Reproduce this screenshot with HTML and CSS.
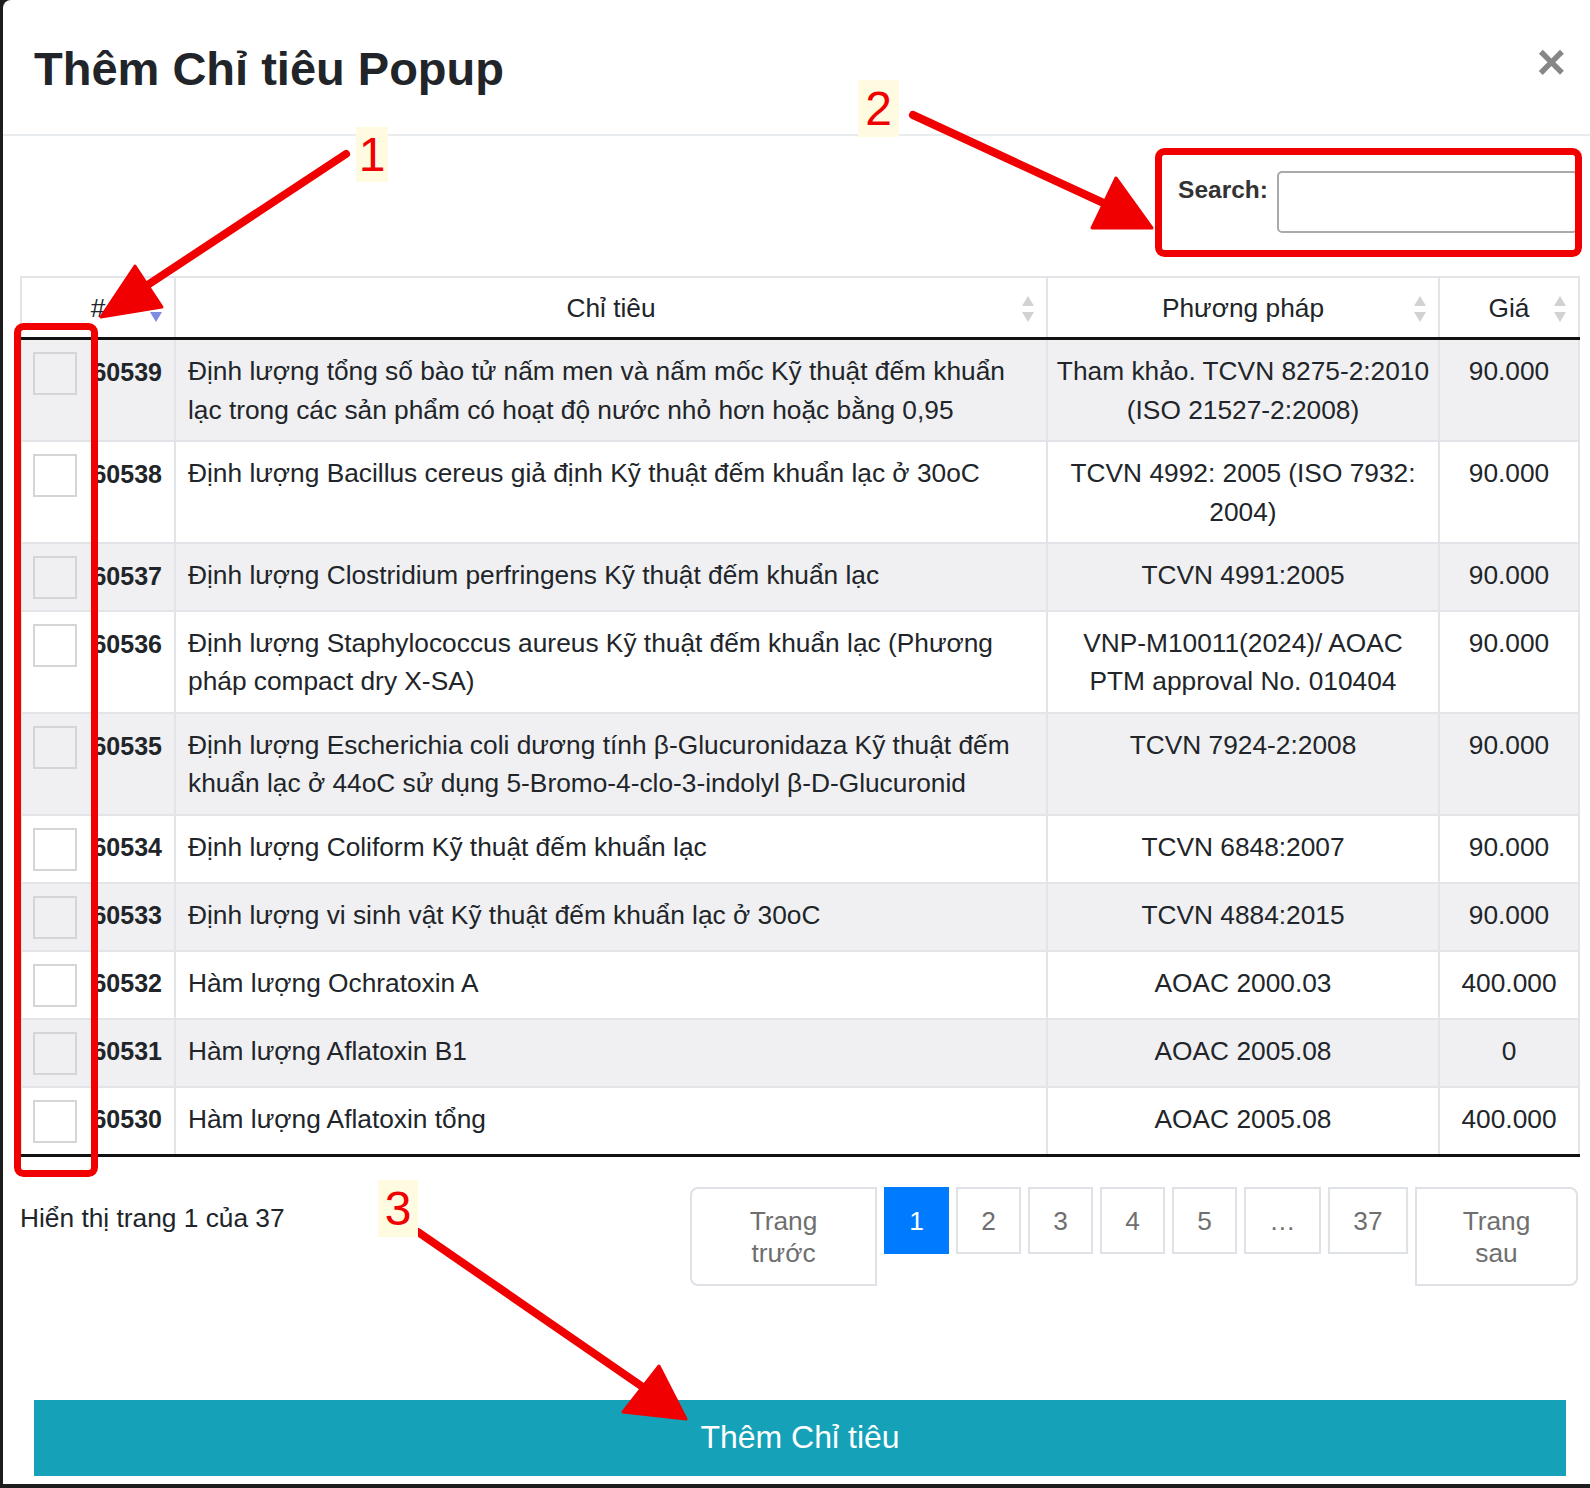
FILE: index.html
```html
<!DOCTYPE html>
<html lang="vi">
<head>
    <meta charset="UTF-8">
    <meta name="viewport" content="width=device-width, initial-scale=1.0">
    <title>Thêm Chỉ tiêu Popup</title>
    <link rel="stylesheet" href="styles.css">
</head>
<body>
    <div class="modal">
        <div class="modal-header">
            <h1 class="modal-title">Thêm Chỉ tiêu Popup</h1>
            <span class="close">×</span>
        </div>
        <div class="modal-body">
            <div class="search">
                <label for="q">Search:</label>
                <input id="q" type="search">
            </div>
            <table class="grid">
                <colgroup>
                    <col class="c-id"><col class="c-name"><col class="c-method"><col class="c-price">
                </colgroup>
                <thead>
                    <tr>
                        <th>#<svg class="sort" viewBox="0 0 12 28"><polygon class="on" points="0,17 6,27 12,17"/></svg></th>
                        <th>Chỉ tiêu<svg class="sort" viewBox="0 0 12 28"><polygon points="0,11 6,1 12,11"/><polygon points="0,17 6,27 12,17"/></svg></th>
                        <th>Phương pháp<svg class="sort" viewBox="0 0 12 28"><polygon points="0,11 6,1 12,11"/><polygon points="0,17 6,27 12,17"/></svg></th>
                        <th>Giá<svg class="sort" viewBox="0 0 12 28"><polygon points="0,11 6,1 12,11"/><polygon points="0,17 6,27 12,17"/></svg></th>
                    </tr>
                </thead>
                <tbody>
                    <tr>
                        <td><div class="idcell"><input class="pick" type="checkbox"><b>60539</b></div></td>
                        <td>Định lượng tổng số bào tử nấm men và nấm mốc Kỹ thuật đếm khuẩn<br>lạc trong các sản phẩm có hoạt độ nước nhỏ hơn hoặc bằng 0,95</td>
                        <td class="mid">Tham khảo. TCVN 8275-2:2010<br>(ISO 21527-2:2008)</td>
                        <td class="mid">90.000</td>
                    </tr>
                    <tr>
                        <td><div class="idcell"><input class="pick" type="checkbox"><b>60538</b></div></td>
                        <td>Định lượng Bacillus cereus giả định Kỹ thuật đếm khuẩn lạc ở 30oC</td>
                        <td class="mid">TCVN 4992: 2005 (ISO 7932:<br>2004)</td>
                        <td class="mid">90.000</td>
                    </tr>
                    <tr>
                        <td><div class="idcell"><input class="pick" type="checkbox"><b>60537</b></div></td>
                        <td>Định lượng Clostridium perfringens Kỹ thuật đếm khuẩn lạc</td>
                        <td class="mid">TCVN 4991:2005</td>
                        <td class="mid">90.000</td>
                    </tr>
                    <tr>
                        <td><div class="idcell"><input class="pick" type="checkbox"><b>60536</b></div></td>
                        <td>Định lượng Staphylococcus aureus Kỹ thuật đếm khuẩn lạc (Phương<br>pháp compact dry X-SA)</td>
                        <td class="mid">VNP-M10011(2024)/ AOAC<br>PTM approval No. 010404</td>
                        <td class="mid">90.000</td>
                    </tr>
                    <tr>
                        <td><div class="idcell"><input class="pick" type="checkbox"><b>60535</b></div></td>
                        <td>Định lượng Escherichia coli dương tính β-Glucuronidaza Kỹ thuật đếm<br>khuẩn lạc ở 44oC sử dụng 5-Bromo-4-clo-3-indolyl β-D-Glucuronid</td>
                        <td class="mid">TCVN 7924-2:2008</td>
                        <td class="mid">90.000</td>
                    </tr>
                    <tr>
                        <td><div class="idcell"><input class="pick" type="checkbox"><b>60534</b></div></td>
                        <td>Định lượng Coliform Kỹ thuật đếm khuẩn lạc</td>
                        <td class="mid">TCVN 6848:2007</td>
                        <td class="mid">90.000</td>
                    </tr>
                    <tr>
                        <td><div class="idcell"><input class="pick" type="checkbox"><b>60533</b></div></td>
                        <td>Định lượng vi sinh vật Kỹ thuật đếm khuẩn lạc ở 30oC</td>
                        <td class="mid">TCVN 4884:2015</td>
                        <td class="mid">90.000</td>
                    </tr>
                    <tr>
                        <td><div class="idcell"><input class="pick" type="checkbox"><b>60532</b></div></td>
                        <td>Hàm lượng Ochratoxin A</td>
                        <td class="mid">AOAC 2000.03</td>
                        <td class="mid">400.000</td>
                    </tr>
                    <tr>
                        <td><div class="idcell"><input class="pick" type="checkbox"><b>60531</b></div></td>
                        <td>Hàm lượng Aflatoxin B1</td>
                        <td class="mid">AOAC 2005.08</td>
                        <td class="mid">0</td>
                    </tr>
                    <tr>
                        <td><div class="idcell"><input class="pick" type="checkbox"><b>60530</b></div></td>
                        <td>Hàm lượng Aflatoxin tổng</td>
                        <td class="mid">AOAC 2005.08</td>
                        <td class="mid">400.000</td>
                    </tr>
                </tbody>
            </table>
            <div class="table-foot">
                <div class="info">Hiển thị trang 1 của 37</div>
                <ul class="pager">
                    <li class="prev">Trang<br>trước</li>
                    <li class="num active">1</li>
                    <li class="num">2</li>
                    <li class="num">3</li>
                    <li class="num">4</li>
                    <li class="num">5</li>
                    <li class="num gap">…</li>
                    <li class="num last">37</li>
                    <li class="next">Trang<br>sau</li>
                </ul>
            </div>
        </div>
        <div class="modal-footer">
            <button class="btn-add">Thêm Chỉ tiêu</button>
        </div>
    </div>

    <!-- annotation layer drawn on top of the screenshot -->
    <svg class="marks" viewBox="0 0 1590 1488">
        <rect x="17.5" y="326.5" width="77" height="847" rx="6"/>
        <rect x="1158.5" y="151.5" width="420" height="102" rx="6"/>
        <line x1="346" y1="154" x2="140" y2="290"/>
        <polygon points="101,317 135,266 162,307"/>
        <line x1="913" y1="115" x2="1110" y2="206"/>
        <polygon points="1152,228 1116,178 1092,228"/>
        <line x1="418" y1="1232" x2="650" y2="1392"/>
        <polygon points="686,1419 659,1366 623,1412"/>
    </svg>
    <span class="tag tag-1">1</span>
    <span class="tag tag-2">2</span>
    <span class="tag tag-3">3</span>
</body>
</html>
```

FILE: styles.css
```css
body {
    margin: 0;
    background-color: #1d1d1d;
    font-family: "Liberation Sans", Arial, Helvetica, sans-serif;
    color: #212529;
    font-size: 26.3px;
    line-height: 38.4px;
    overflow: hidden;
}
.modal {
    margin-left: 3px;
    height: 1484px;
    background-color: #ffffff;
    border-top-left-radius: 8px;
    overflow: hidden;
}
.modal-header {
    box-sizing: border-box;
    height: 136px;
    display: flex;
    align-items: center;
    justify-content: space-between;
    padding: 4px 24px 0 31px;
    border-bottom: 2px solid #e9ecef;
}
.modal-title {
    margin: 0;
    font-size: 47px;
    line-height: 1.2;
    font-weight: bold;
}
.close {
    font-size: 50px;
    line-height: 1;
    font-weight: bold;
    color: #868686;
    margin-bottom: 14px;
}
.modal-body {
    padding: 0 12px 0 17px;
}
.search {
    display: flex;
    justify-content: flex-end;
    align-items: flex-start;
    margin-top: 35px;
}
.search label {
    font-weight: bold;
    font-size: 24.5px;
    color: #333333;
    margin-right: 9px;
}
.search input {
    box-sizing: border-box;
    width: 301px;
    height: 62px;
    border: 2px solid #aaaaaa;
    border-radius: 5px;
    padding: 0 12px;
    font: inherit;
}
.grid {
    margin-top: 43px;
    width: 1558px;
    table-layout: fixed;
    border-collapse: collapse;
}
.c-id { width: 154px; }
.c-name { width: 872px; }
.c-method { width: 392px; }
.c-price { width: 140px; }
.grid th, .grid td {
    border: 2px solid #e3e4e8;
}
.grid th {
    position: relative;
    padding: 11px 12px 10px;
    font-weight: normal;
    text-align: center;
    border-bottom: 3px solid #111111;
}
.grid td {
    padding: 12px 12px 11px;
    vertical-align: top;
}
.grid tbody tr:nth-child(odd) {
    background-color: #f0f0f2;
}
.grid tbody tr:last-child td {
    border-bottom: 3px solid #111111;
}
.grid td.mid {
    padding-left: 4px;
    padding-right: 4px;
    text-align: center;
    white-space: nowrap;
}
.sort {
    position: absolute;
    right: 12px;
    top: 17px;
    width: 12px;
    height: 28px;
    fill: #d2d2d4;
}
.sort .on {
    fill: #7f8ce0;
}
.idcell {
    display: flex;
    align-items: center;
    justify-content: space-between;
}
.idcell b {
    font-size: 25px;
    margin-top: -3px;
}
.pick {
    appearance: none;
    -webkit-appearance: none;
    box-sizing: border-box;
    width: 44px;
    height: 43px;
    margin: 0 0 0 -1px;
    border: 2px solid #d5d5d7;
    background: transparent;
}
.table-foot {
    display: flex;
    justify-content: space-between;
    align-items: flex-start;
    margin-top: 30px;
}
.info {
    padding-top: 12px;
}
.pager {
    display: flex;
    gap: 7px;
    margin: 0;
    padding: 0;
    list-style: none;
    color: #6f6f6f;
}
.pager li {
    box-sizing: border-box;
    border: 2px solid #dee2e6;
    padding: 16px 0 15px;
    line-height: 32px;
    text-align: center;
}
.pager .prev {
    width: 187px;
    border-radius: 8px 0 0 8px;
}
.pager .next {
    width: 163px;
    border-radius: 0 8px 8px 0;
}
.pager .num {
    width: 65px;
    align-self: flex-start;
}
.pager .gap {
    width: 77px;
}
.pager .last {
    width: 80px;
}
.pager .active {
    background-color: #007bff;
    border-color: #007bff;
    color: #ffffff;
}
.modal-footer {
    padding: 0 24px 0 31px;
    margin-top: 114px;
}
.btn-add {
    display: block;
    width: 100%;
    height: 76px;
    border: none;
    background-color: #15a2b8;
    color: #ffffff;
    font-family: inherit;
    font-size: 32px;
}
.marks {
    position: absolute;
    top: 0;
    left: 0;
    width: 1590px;
    height: 1488px;
    pointer-events: none;
}
.marks rect {
    fill: none;
    stroke: #f00000;
    stroke-width: 7;
}
.marks line {
    stroke: #f00000;
    stroke-width: 8;
    stroke-linecap: round;
}
.marks polygon {
    fill: #f00000;
    stroke: #f00000;
    stroke-width: 3;
    stroke-linejoin: round;
}
.tag {
    position: absolute;
    display: flex;
    align-items: center;
    justify-content: center;
    background-color: #fffbe1;
    color: #f00000;
    font-size: 48px;
    line-height: 1;
}
.tag-1 { left: 356px; top: 127px; width: 32px; height: 55px; }
.tag-2 { left: 858px; top: 80px; width: 41px; height: 57px; }
.tag-3 { left: 378px; top: 1180px; width: 40px; height: 57px; }
```
